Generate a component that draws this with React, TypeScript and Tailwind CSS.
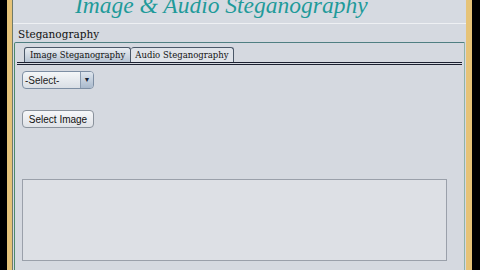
export default function App() {
  return (
    <div className="flex h-[270px] w-[480px] overflow-hidden bg-black">
      <div className="w-[7px] shrink-0 bg-black" />
      <div className="w-[5px] shrink-0 bg-[#e6c378]" />
      <div className="w-px shrink-0 bg-[#6f7a6a]" />
      <div className="flex flex-1 flex-col bg-[#d5d9e0]">
        {/* title bar */}
        <div className="h-[24px] overflow-hidden border-b border-[#eef0f3] bg-[#d6dae1]">
          <div
            className="-mt-[10px] pl-[62px] text-[23.5px] leading-[30px] italic text-[#1f9a9a]"
            style={{ fontFamily: '"Liberation Serif", serif' }}
          >
            Image &amp; Audio Steganography
          </div>
        </div>
        <div
          className="pl-[5px] pt-[4px] text-[10.5px] leading-[13px] text-[#111]"
          style={{ fontFamily: '"DejaVu Serif", serif' }}
        >
          Steganography
        </div>
        {/* panel */}
        <div className="ml-px mr-px mt-[1px] flex flex-1 flex-col rounded-tl-[2px] border border-b-0 border-[#4f7f82] border-l-[#4e8a6a] border-r-[#8fb3a6] bg-[#d5d9e0]">
          <div className="mx-[2px] flex items-end border-b-[3px] border-double border-[#1b2030] pl-[7px] pt-[4px]">
            <div
              className="flex h-[15px] items-center rounded-t-[3px] border border-b-0 border-[#4b5868] bg-gradient-to-b from-[#e9edf2] to-[#b7c4d3] px-[5px] text-[8.5px] text-[#111]"
              style={{ fontFamily: '"DejaVu Serif", serif' }}
            >
              Image Steganography
            </div>
            <div
              className="flex h-[15px] items-center rounded-t-[3px] border border-b-0 border-l-0 border-[#4b5868] bg-[#dfe3e9] px-[4px] text-[8.5px] text-[#111]"
              style={{ fontFamily: '"DejaVu Serif", serif' }}
            >
              Audio Steganography
            </div>
          </div>
          <div className="flex flex-1 flex-col pl-[7px] pt-[6px]">
            <div
              className="flex h-[18px] w-[72px] items-center overflow-hidden rounded-[4px] border border-[#7d8ea3] bg-gradient-to-b from-[#f4f6f8] to-[#d9dee5] text-[10px] text-[#222]"
              style={{ fontFamily: '"Liberation Sans", sans-serif' }}
            >
              <span className="flex-1 pl-[2px]">-Select-</span>
              <span className="flex h-full w-[13px] items-center justify-center border-l border-[#8a9bb0] bg-gradient-to-b from-[#dfe6ee] to-[#a9b9cc] text-[7px] text-[#1b2433]">
                ▼
              </span>
            </div>
            <div
              className="mt-[21px] flex h-[18px] w-[72px] items-center justify-center rounded-[4px] border border-[#8a929c] bg-gradient-to-b from-[#f6f7f9] to-[#dfe2e7] text-[10px] text-[#111]"
              style={{ fontFamily: '"Liberation Sans", sans-serif' }}
            >
              Select Image
            </div>
            <div className="mt-[51px] h-[82px] w-[425px] border border-[#9aa0aa] bg-[#dde0e5]" />
          </div>
        </div>
      </div>
      <div className="w-[6px] shrink-0 bg-[#e6c378]" />
      <div className="w-[8px] shrink-0 bg-black" />
    </div>
  )
}
